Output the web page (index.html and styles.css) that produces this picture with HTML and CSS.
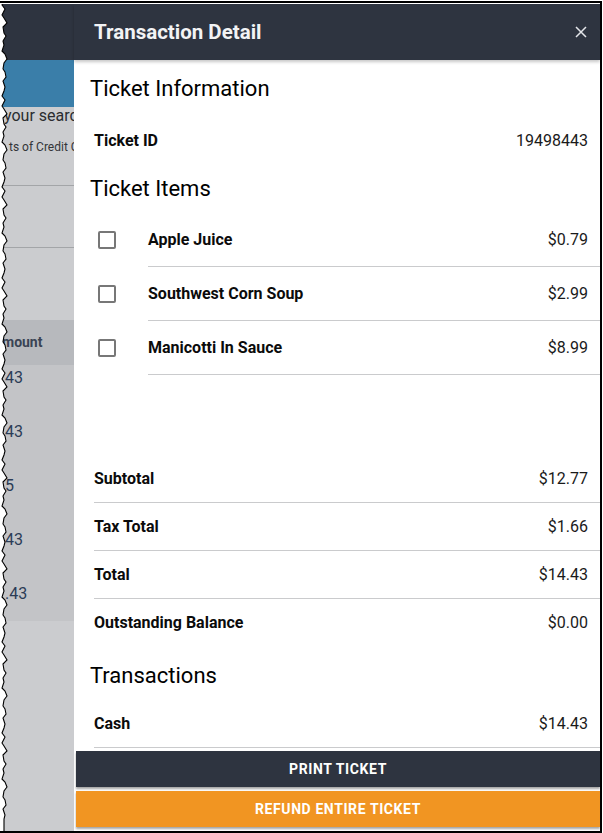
FILE: index.html
```html
<!DOCTYPE html>
<html lang="en">
<head>
<meta charset="utf-8">
<title>Transaction Detail</title>
<link rel="stylesheet" href="styles.css">
</head>
<body>
<div class="frame">
  <div class="app">
    <div class="bg">
      <div class="bg-header"></div>
      <div class="bg-banner"></div>
      <div class="bg-main">
        <div class="bg-title"><span>your search</span></div>
        <div class="bg-sub"><span>ts of Credit C</span></div>
        <div class="bg-rule bg-rule-1"></div>
        <div class="bg-rule bg-rule-2"></div>
        <div class="bg-thead">mount</div>
        <div class="bg-rows">
          <div class="bg-cell">43</div>
          <div class="bg-cell">43</div>
          <div class="bg-cell">5</div>
          <div class="bg-cell">43</div>
          <div class="bg-cell">.43</div>
        </div>
      </div>
    </div>

    <aside class="drawer">
      <header class="drawer-head">
        <h1 class="drawer-title">Transaction Detail</h1>
        <button class="close" aria-label="Close">
          <svg width="12" height="12" viewBox="0 0 12 12"><path d="M1 1 L11 11 M11 1 L1 11" stroke="#e4e6ea" stroke-width="1.5" fill="none"/></svg>
        </button>
      </header>

      <div class="drawer-body">
        <h2 class="sec sec-first">Ticket Information</h2>
        <div class="row row-id">
          <span class="label">Ticket ID</span>
          <span class="val">19498443</span>
        </div>

        <h2 class="sec">Ticket Items</h2>
        <ul class="items">
          <li class="item">
            <span class="check"></span>
            <div class="item-main"><span class="label">Apple Juice</span><span class="val">$0.79</span></div>
          </li>
          <li class="item">
            <span class="check"></span>
            <div class="item-main"><span class="label">Southwest Corn Soup</span><span class="val">$2.99</span></div>
          </li>
          <li class="item">
            <span class="check"></span>
            <div class="item-main"><span class="label">Manicotti In Sauce</span><span class="val">$8.99</span></div>
          </li>
        </ul>

        <div class="summary">
          <div class="row row-line"><span class="label">Subtotal</span><span class="val">$12.77</span></div>
          <div class="row row-line"><span class="label">Tax Total</span><span class="val">$1.66</span></div>
          <div class="row row-line"><span class="label">Total</span><span class="val">$14.43</span></div>
          <div class="row"><span class="label">Outstanding Balance</span><span class="val">$0.00</span></div>
        </div>

        <h2 class="sec sec-tx">Transactions</h2>
        <div class="row row-line"><span class="label">Cash</span><span class="val">$14.43</span></div>
      </div>

      <footer class="drawer-foot">
        <button class="btn btn-dark">Print Ticket</button>
        <button class="btn btn-orange">Refund Entire Ticket</button>
      </footer>
    </aside>

    <svg class="torn" width="12" height="840" viewBox="0 0 12 840">
      <path class="torn-fill" d="M-3 -6 L4 -6 L4 0 l-2 5 l3 4 l-3 6 l2 3 l3 5 l-4 4 l1 6 l2 3 l-3 5 l1 4 l-2 6 l3 3 l2 5 l-3 4 l-1 6 l2 3 l1 5 l-3 4 l2 6 l-1 4 l-2 5 l3 4 l-3 6 l2 3 l3 5 l-4 4 l1 6 l2 3 l-3 5 l1 4 l-2 6 l3 3 l2 5 l-3 4 l-1 6 l2 3 l1 5 l-3 4 l2 6 l-1 4 l-2 5 l3 4 l-3 6 l2 3 l3 5 l-4 4 l1 6 l2 3 l-3 5 l1 4 l-2 6 l3 3 l2 5 l-3 4 l-1 6 l2 3 l1 5 l-3 4 l2 6 l-1 4 l-2 5 l3 4 l-3 6 l2 3 l3 5 l-4 4 l1 6 l2 3 l-3 5 l1 4 l-2 6 l3 3 l2 5 l-3 4 l-1 6 l2 3 l1 5 l-3 4 l2 6 l-1 4 l-2 5 l3 4 l-3 6 l2 3 l3 5 l-4 4 l1 6 l2 3 l-3 5 l1 4 l-2 6 l3 3 l2 5 l-3 4 l-1 6 l2 3 l1 5 l-3 4 l2 6 l-1 4 l-2 5 l3 4 l-3 6 l2 3 l3 5 l-4 4 l1 6 l2 3 l-3 5 l1 4 l-2 6 l3 3 l2 5 l-3 4 l-1 6 l2 3 l1 5 l-3 4 l2 6 l-1 4 l-2 5 l3 4 l-3 6 l2 3 l3 5 l-4 4 l1 6 l2 3 l-3 5 l1 4 l-2 6 l3 3 l2 5 l-3 4 l-1 6 l2 3 l1 5 l-3 4 l2 6 l-1 4 l-2 5 l3 4 l-3 6 l2 3 l3 5 l-4 4 l1 6 l2 3 l-3 5 l1 4 l-2 6 l3 3 l2 5 l-3 4 l-1 6 l2 3 l1 5 l-3 4 l2 6 l-1 4 l-2 5 l3 4 l-3 6 l2 3 l3 5 l-4 4 l1 6 l2 3 l-3 5 l1 4 l-2 6 l3 3 l2 5 l-3 4 l-1 6 l2 3 l1 5 l-3 4 l2 6 l-1 4 L4 850 L-3 850 Z"/>
    </svg>
  </div>
</div>
</body>
</html>
```

FILE: styles.css
```css
* { box-sizing: border-box; }

html, body {
  margin: 0;
  padding: 0;
  background: #ffffff;
}

body {
  width: 603px;
  height: 833px;
  overflow: hidden;
  font-family: Roboto, "Liberation Sans", Arial, sans-serif;
  color: #111;
}

.frame {
  margin: 1px 1px 0 0;
  width: 602px;
  height: 832px;
  border-top: 2px solid #000;
  border-right: 2px solid #000;
  border-bottom: 2px solid #000;
  padding-top: 1px;
  background: #fff;
}

.app {
  position: relative;
  height: 100%;
  overflow: hidden;
}

/* ---------- dimmed page behind the drawer ---------- */
.bg {
  height: 100%;
  display: flex;
  flex-direction: column;
  background: #cbcccf;
}

.bg-header {
  height: 56px;
  background: #2e3440;
  flex: none;
}

.bg-banner {
  height: 47px;
  background: #3a7ea9;
  flex: none;
}

.bg-main {
  flex: 1;
  display: flex;
  flex-direction: column;
}

.bg-title,
.bg-sub {
  width: 74px;
  white-space: nowrap;
}

.bg-title {
  margin-top: 0;
  padding-left: 4px;
  font-size: 16px;
  line-height: 18px;
  color: #2a2c30;
}

.bg-sub {
  margin-top: 14px;
  padding-left: 9px;
  font-size: 12px;
  line-height: 16px;
  color: #333538;
}

.bg-rule {
  height: 1px;
  background: #a3a5a8;
}

.bg-rule-1 { margin-top: 30px; }
.bg-rule-2 { margin-top: 61px; }

.bg-thead {
  margin-top: 72px;
  height: 45px;
  line-height: 45px;
  background: #b7b9bd;
  padding-left: 2px;
  font-size: 14px;
  font-weight: 700;
  color: #3a4454;
}

.bg-rows {
  height: 256px;
  background: #c3c4c7;
  padding-top: 3px;
  display: flex;
  flex-direction: column;
  gap: 34px;
}

.bg-cell {
  padding-left: 5px;
  font-size: 16px;
  line-height: 20px;
  color: #2b3c56;
}

/* ---------- torn left edge ---------- */
.torn {
  position: absolute;
  left: 0;
  top: -4px;
  overflow: visible;
}

.torn-fill {
  fill: #ffffff;
  stroke: #000000;
  stroke-width: 1.1;
}

/* ---------- drawer ---------- */
.drawer {
  position: absolute;
  top: 0;
  right: 0;
  bottom: 0;
  width: 526px;
  background: #ffffff;
  display: flex;
  flex-direction: column;
}

.drawer-head {
  flex: none;
  height: 56px;
  background: #2e3440;
  display: flex;
  align-items: center;
  justify-content: space-between;
  padding: 0 13px 0 20px;
  box-shadow: 0 2px 3px rgba(0, 0, 0, 0.22);
  position: relative;
  z-index: 1;
}

.drawer-title {
  margin: 0;
  font-size: 20.5px;
  font-weight: 700;
  color: #f2f3f5;
  letter-spacing: 0;
}

.close {
  border: 0;
  background: none;
  padding: 0;
  width: 12px;
  height: 12px;
  display: flex;
}

.drawer-body {
  flex: 1;
  overflow: hidden;
  padding-left: 16px;
}

.sec {
  margin: 10px 0 10px;
  font-size: 22px;
  line-height: 28px;
  font-weight: 400;
  color: #000;
}

.sec-first { margin: 15px 0 13px; }
.sec-tx { margin-top: 16px; }

.row {
  margin-left: 4px;
  height: 47px;
  padding-right: 12px;
  display: flex;
  align-items: center;
  justify-content: space-between;
}

.row-id { height: 49px; }

.row-line {
  height: 48px;
  border-bottom: 1px solid #cacbcd;
}

.label {
  font-size: 16px;
  font-weight: 700;
  color: #0b0b0b;
}

.val {
  font-size: 16px;
  font-weight: 400;
  color: #1a1a1a;
}

.items {
  list-style: none;
  margin: 0;
  padding: 0 0 0 4px;
}

.item {
  display: flex;
  height: 54px;
}

.check {
  flex: none;
  width: 18px;
  height: 18px;
  margin: 18px 32px 0 4px;
  border: 2px solid #777;
  border-radius: 2px;
}

.item-main {
  flex: 1;
  display: flex;
  align-items: center;
  justify-content: space-between;
  padding-right: 12px;
  border-bottom: 1px solid #cacbcd;
}

.summary {
  margin-top: 80px;
}

.drawer-foot {
  flex: none;
  display: flex;
  flex-direction: column;
  gap: 4px;
  padding: 0 0 4px 2px;
}

.btn {
  height: 36px;
  border: 0;
  padding: 0;
  font-family: Roboto, "Liberation Sans", Arial, sans-serif;
  font-size: 14px;
  font-weight: 700;
  letter-spacing: 0.6px;
  text-transform: uppercase;
  color: #ffffff;
  box-shadow: 0 2px 2px rgba(0, 0, 0, 0.35);
}

.btn-dark { background: #2e3440; }
.btn-orange { background: #f19522; }
```
